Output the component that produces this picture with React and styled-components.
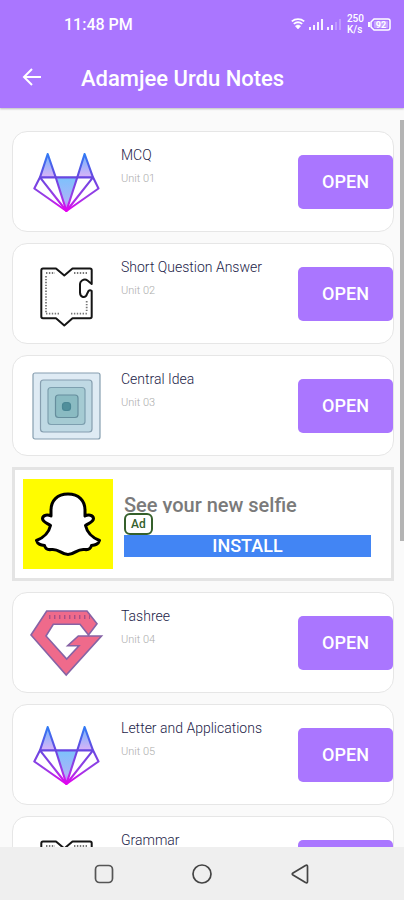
import React from 'react';
import styled, { createGlobalStyle } from 'styled-components';

const purple = '#AA76FF';

const GlobalStyle = createGlobalStyle`
  * {
    box-sizing: border-box;
  }

  body {
    margin: 0;
    font-family: Roboto, "Liberation Sans", sans-serif;
    background-color: #FAFAFA;
  }

  button {
    font-family: inherit;
    border: none;
    padding: 0;
    cursor: pointer;
  }
`;

const ScreenStyled = styled.div`
  display: flex;
  flex-direction: column;
  height: 100vh;
  overflow: hidden;
`;

const HeaderStyled = styled.header`
  background-color: ${purple};
  color: white;
  box-shadow: 0 1px 2px rgba(0, 0, 0, 0.25);
  z-index: 1;
`;

const StatusBarStyled = styled.div`
  display: flex;
  align-items: center;
  justify-content: space-between;
  height: 48px;
  padding: 0 13px 0 64px;
`;

const TimeStyled = styled.span`
  font-size: 16px;
  font-weight: 500;
`;

const StatusIconsStyled = styled.div`
  display: flex;
  align-items: center;
  gap: 4px;
`;

const SpeedStyled = styled.div`
  font-size: 10px;
  font-weight: 500;
  line-height: 11px;
  padding-left: 2px;
`;

const AppBarStyled = styled.div`
  display: flex;
  align-items: center;
  gap: 37px;
  height: 60px;
  padding-left: 20px;
`;

const BackButtonStyled = styled.button`
  display: flex;
  background: none;
  color: white;
`;

const TitleStyled = styled.h1`
  margin: 0;
  font-size: 22px;
  font-weight: 500;
`;

const ContentStyled = styled.main`
  position: relative;
  flex: 1;
  min-height: 0;
  overflow: hidden;
`;

const ListStyled = styled.div`
  display: flex;
  flex-direction: column;
  gap: 11px;
  padding: 23px 10px 11px 12px;
`;

const ScrollbarStyled = styled.div`
  position: absolute;
  top: 12px;
  right: 0;
  width: 4px;
  height: 57%;
  background-color: #B4B4B4;
`;

const CardStyled = styled.article`
  display: flex;
  align-items: center;
  gap: 17px;
  padding: 12px 0 12px 16px;
  background-color: white;
  border: 1px solid #E6E6E6;
  border-radius: 15px;
`;

const CardTextStyled = styled.div`
  flex: 1;
  align-self: stretch;
  padding-top: 2px;
`;

const CardTitleStyled = styled.h2`
  margin: 0;
  font-size: 14px;
  font-weight: 300;
  line-height: 18px;
  color: #1C1C48;
`;

const CardUnitStyled = styled.p`
  margin: 8px 0 0;
  font-size: 11px;
  font-weight: 300;
  line-height: 13px;
  color: #ACACAC;
`;

const OpenButtonStyled = styled.button`
  width: 95px;
  height: 54px;
  border-radius: 5px;
  background-color: ${purple};
  color: white;
  font-size: 18px;
  font-weight: 500;
`;

const AdStyled = styled.aside`
  display: flex;
  align-items: center;
  gap: 11px;
  padding: 9px 20px 9px 8px;
  background-color: white;
  border: 3px solid #E4E4E4;
`;

const AdBodyStyled = styled.div`
  flex: 1;
  display: flex;
  flex-direction: column;
  align-items: flex-start;
`;

const AdTitleStyled = styled.div`
  height: 22px;
  overflow: hidden;
  font-size: 20px;
  font-weight: 500;
  line-height: 28px;
  color: #7A7A7A;
`;

const AdBadgeStyled = styled.span`
  height: 22px;
  padding: 0 5px;
  border: 2px solid #35602B;
  border-radius: 6px;
  color: #35602B;
  font-size: 12px;
  font-weight: 500;
  line-height: 18px;
`;

const InstallButtonStyled = styled.button`
  width: 100%;
  height: 22px;
  background-color: #4285F4;
  color: white;
  font-size: 18px;
  font-weight: 500;
  line-height: 22px;
`;

const NavBarStyled = styled.nav`
  display: flex;
  height: 53px;
  padding: 0 55px;
  background-color: #EFEFEF;
`;

const NavButtonStyled = styled.button`
  flex: 1;
  display: flex;
  align-items: center;
  justify-content: center;
  background: none;
`;

const WifiIcon = () => (
  <svg width="14" height="12" viewBox="0 0 14 12" fill="none" stroke="white" strokeWidth="1.8">
    <path d="M0.8 3.4C4.4 0.4 9.6 0.4 13.2 3.4" />
    <path d="M2.8 5.9C5.3 3.9 8.7 3.9 11.2 5.9" />
    <path d="M4.4 8C6 6.7 8 6.7 9.6 8L7 11Z" fill="white" strokeWidth="0.6" />
  </svg>
);

const SignalIcon = ({ bars }) => (
  <svg width="14" height="12" viewBox="0 0 14 12" fill="white">
    {[3, 5, 8, 11].map((height, index) => (
      <rect key={height} x={index * 4} y={12 - height} width="2" height={height} opacity={index < bars ? 0.9 : 0.25} />
    ))}
  </svg>
);

const BatteryIcon = () => (
  <svg width="23" height="13" viewBox="0 0 23 13">
    <rect x="0" y="4" width="2" height="5" fill="white" />
    <path d="M6 1H20Q22 1 22 3V10Q22 12 20 12H6L3 9V4Z" fill="none" stroke="white" strokeWidth="1.5" />
    <rect x="6" y="3" width="14" height="7" rx="1" fill="white" opacity="0.35" />
    <text x="13" y="9.6" textAnchor="middle" fill="white" fontSize="9" fontWeight="700">92</text>
  </svg>
);

const BackIcon = () => (
  <svg width="24" height="24" viewBox="0 0 24 24" fill="none" stroke="white" strokeWidth="2">
    <path d="M21 11H4.5M12 3L4 11L12 19" />
  </svg>
);

const FoxIcon = () => (
  <svg width="75" height="75" viewBox="0 0 75 75" strokeLinejoin="round">
    <defs>
      <linearGradient id="foxLine" gradientUnits="userSpaceOnUse" x1="0" y1="9" x2="0" y2="67">
        <stop offset="0" stopColor="#2E7DF6" />
        <stop offset="0.4" stopColor="#6547E0" />
        <stop offset="0.75" stopColor="#9A3CE6" />
        <stop offset="1" stopColor="#E500F0" />
      </linearGradient>
      <linearGradient id="foxEar" x1="0" y1="0" x2="0" y2="1">
        <stop offset="0" stopColor="#6FB6FB" />
        <stop offset="1" stopColor="#D9B2F8" />
      </linearGradient>
      <linearGradient id="foxFace" x1="0" y1="0" x2="0" y2="1">
        <stop offset="0" stopColor="#7CC2FC" />
        <stop offset="0.7" stopColor="#A9B4F8" />
        <stop offset="1" stopColor="#D65CF2" />
      </linearGradient>
    </defs>
    <path d="M18.7 10L11 33.3H26.7ZM55.6 10L48.3 33.3H64Z" fill="url(#foxEar)" />
    <path d="M26.7 33.3H48.3L37.4 67Z" fill="url(#foxFace)" />
    <g fill="none" stroke="url(#foxLine)" strokeWidth="2.1">
      <path d="M18.7 10L11 33.3L5.3 44.5L37.4 67L69.5 44.5L64 33.3L55.6 10L48.3 33.3L37.4 67L26.7 33.3Z" />
      <path d="M11 33.3L64 33.4M11 33.3L37.4 67L64 33.3" />
    </g>
  </svg>
);

const PuzzleIcon = () => (
  <svg width="75" height="75" viewBox="0 0 75 75" fill="none" stroke="#151515">
    <path
      d="M14 12.5H27L35.3 19.5L43.5 12.5H61Q62.7 12.5 62.7 14V28L58.5 24.5Q56 22.5 53 24.5Q51 26 51 28V36.5Q51 40 54 41Q57 41.5 58 38L59.5 35Q61 33.5 62.7 35V60.5Q62.7 62.3 61 62.3H43.5L35.3 69.5L27 62.3H14Q12.3 62.3 12.3 60.5V14.5Q12.3 12.5 14 12.5Z"
      strokeWidth="2"
      strokeLinejoin="round"
    />
    <path
      d="M17 17H26M45 17H59M17 20V57M17 57.7H30M42 57.7H58M57.7 45V56"
      stroke="#777777"
      strokeWidth="1.8"
      strokeDasharray="1.4 1.5"
    />
  </svg>
);

const SquaresIcon = () => (
  <svg width="75" height="75" viewBox="0 0 75 75" stroke="#869EAF" strokeWidth="1.2">
    <rect x="4" y="5" width="67" height="66" rx="2" fill="#DFEBF4" />
    <rect x="11.5" y="12" width="51.5" height="52" rx="3" fill="#BFD9E4" />
    <rect x="19" y="19.5" width="37" height="37" rx="3" fill="#A5CBD3" stroke="#7D9FAF" />
    <rect x="26.5" y="27" width="22.5" height="22.5" rx="3" fill="#8ABBC2" stroke="#668E9D" />
    <rect x="33.5" y="34.5" width="8" height="8" rx="3" fill="#518F9B" stroke="#4B8795" />
  </svg>
);

const GemIcon = () => (
  <svg width="75" height="75" viewBox="0 0 75 75" fill="none">
    <path
      d="M17.7 6H58L68 18.7L59.5 30L51 19.3H24.3L17 31L37.7 54L50 40.7H38.7L49.3 31H72.5L37.2 70L2 30Z"
      fill="#EF6A8B"
      stroke="#8663A5"
      strokeWidth="1.6"
    />
    <path d="M20 12H61" stroke="#A84F86" strokeWidth="4" strokeDasharray="1.4 3.6" />
  </svg>
);

const GhostIcon = () => (
  <svg width="90" height="90" viewBox="0 0 90 90">
    <rect width="90" height="90" fill="#FFFC00" />
    <path
      d="M45 15C34 15 28 22 28 31V37C25 35.5 20 35.5 19.5 39.5C19.5 43 24 44 27.5 46.5C26 53 21 58.5 13.5 61.5C14.5 65.5 18 66 21.5 66.5C22.5 70.5 25 71 28.5 70.5C36 69.5 38 75.5 45 75.5C52 75.5 54 69.5 61.5 70.5C65 71 67.5 70.5 68.5 66.5C72 66 75.5 65.5 76.5 61.5C69 58.5 64 53 62.5 46.5C66 44 70.5 43 70.5 39.5C70 35.5 65 35.5 62 37V31C62 22 56 15 45 15Z"
      fill="white"
      stroke="black"
      strokeWidth="3"
      strokeLinejoin="round"
    />
  </svg>
);

const units = [
  { title: 'MCQ', unit: 'Unit 01', Icon: FoxIcon },
  { title: 'Short Question Answer', unit: 'Unit 02', Icon: PuzzleIcon },
  { title: 'Central Idea', unit: 'Unit 03', Icon: SquaresIcon },
  { title: 'Tashree', unit: 'Unit 04', Icon: GemIcon },
  { title: 'Letter and Applications', unit: 'Unit 05', Icon: FoxIcon },
  { title: 'Grammar', unit: 'Unit 06', Icon: PuzzleIcon },
];

const UnitCard = ({ title, unit, Icon }) => (
  <CardStyled>
    <Icon />
    <CardTextStyled>
      <CardTitleStyled>{title}</CardTitleStyled>
      <CardUnitStyled>{unit}</CardUnitStyled>
    </CardTextStyled>
    <OpenButtonStyled type="button" aria-label={`OPEN ${title}`}>OPEN</OpenButtonStyled>
  </CardStyled>
);

const AdBanner = () => (
  <AdStyled>
    <GhostIcon />
    <AdBodyStyled>
      <AdTitleStyled>See your new selfie</AdTitleStyled>
      <AdBadgeStyled>Ad</AdBadgeStyled>
      <InstallButtonStyled type="button">INSTALL</InstallButtonStyled>
    </AdBodyStyled>
  </AdStyled>
);

const App = () => (
  <ScreenStyled>
    <GlobalStyle />
    <HeaderStyled>
      <StatusBarStyled>
        <TimeStyled>11:48 PM</TimeStyled>
        <StatusIconsStyled>
          <WifiIcon />
          <SignalIcon bars={4} />
          <SignalIcon bars={2} />
          <SpeedStyled>250<br />K/s</SpeedStyled>
          <BatteryIcon />
        </StatusIconsStyled>
      </StatusBarStyled>
      <AppBarStyled>
        <BackButtonStyled type="button" aria-label="Back"><BackIcon /></BackButtonStyled>
        <TitleStyled>Adamjee Urdu Notes</TitleStyled>
      </AppBarStyled>
    </HeaderStyled>
    <ContentStyled>
      <ListStyled>
        {units.slice(0, 3).map(item => <UnitCard key={item.unit} {...item} />)}
        <AdBanner />
        {units.slice(3).map(item => <UnitCard key={item.unit} {...item} />)}
      </ListStyled>
      <ScrollbarStyled />
    </ContentStyled>
    <NavBarStyled>
      <NavButtonStyled type="button" aria-label="Recent apps">
        <svg width="20" height="20" viewBox="0 0 20 20" fill="none" stroke="#555555" strokeWidth="1.7">
          <rect x="1.5" y="1.5" width="17" height="17" rx="4" />
        </svg>
      </NavButtonStyled>
      <NavButtonStyled type="button" aria-label="Home">
        <svg width="20" height="20" viewBox="0 0 20 20" fill="none" stroke="#444444" strokeWidth="1.7">
          <circle cx="10" cy="10" r="9" />
        </svg>
      </NavButtonStyled>
      <NavButtonStyled type="button" aria-label="Back to previous screen">
        <svg width="20" height="20" viewBox="0 0 20 20" fill="none" stroke="#444444" strokeWidth="1.7" strokeLinejoin="round">
          <path d="M15.5 1.5Q17.5 0.5 17.5 2.5V17.5Q17.5 19.5 15.5 18.5L3 11Q1.5 10 3 9Z" />
        </svg>
      </NavButtonStyled>
    </NavBarStyled>
  </ScreenStyled>
);

export default App;
